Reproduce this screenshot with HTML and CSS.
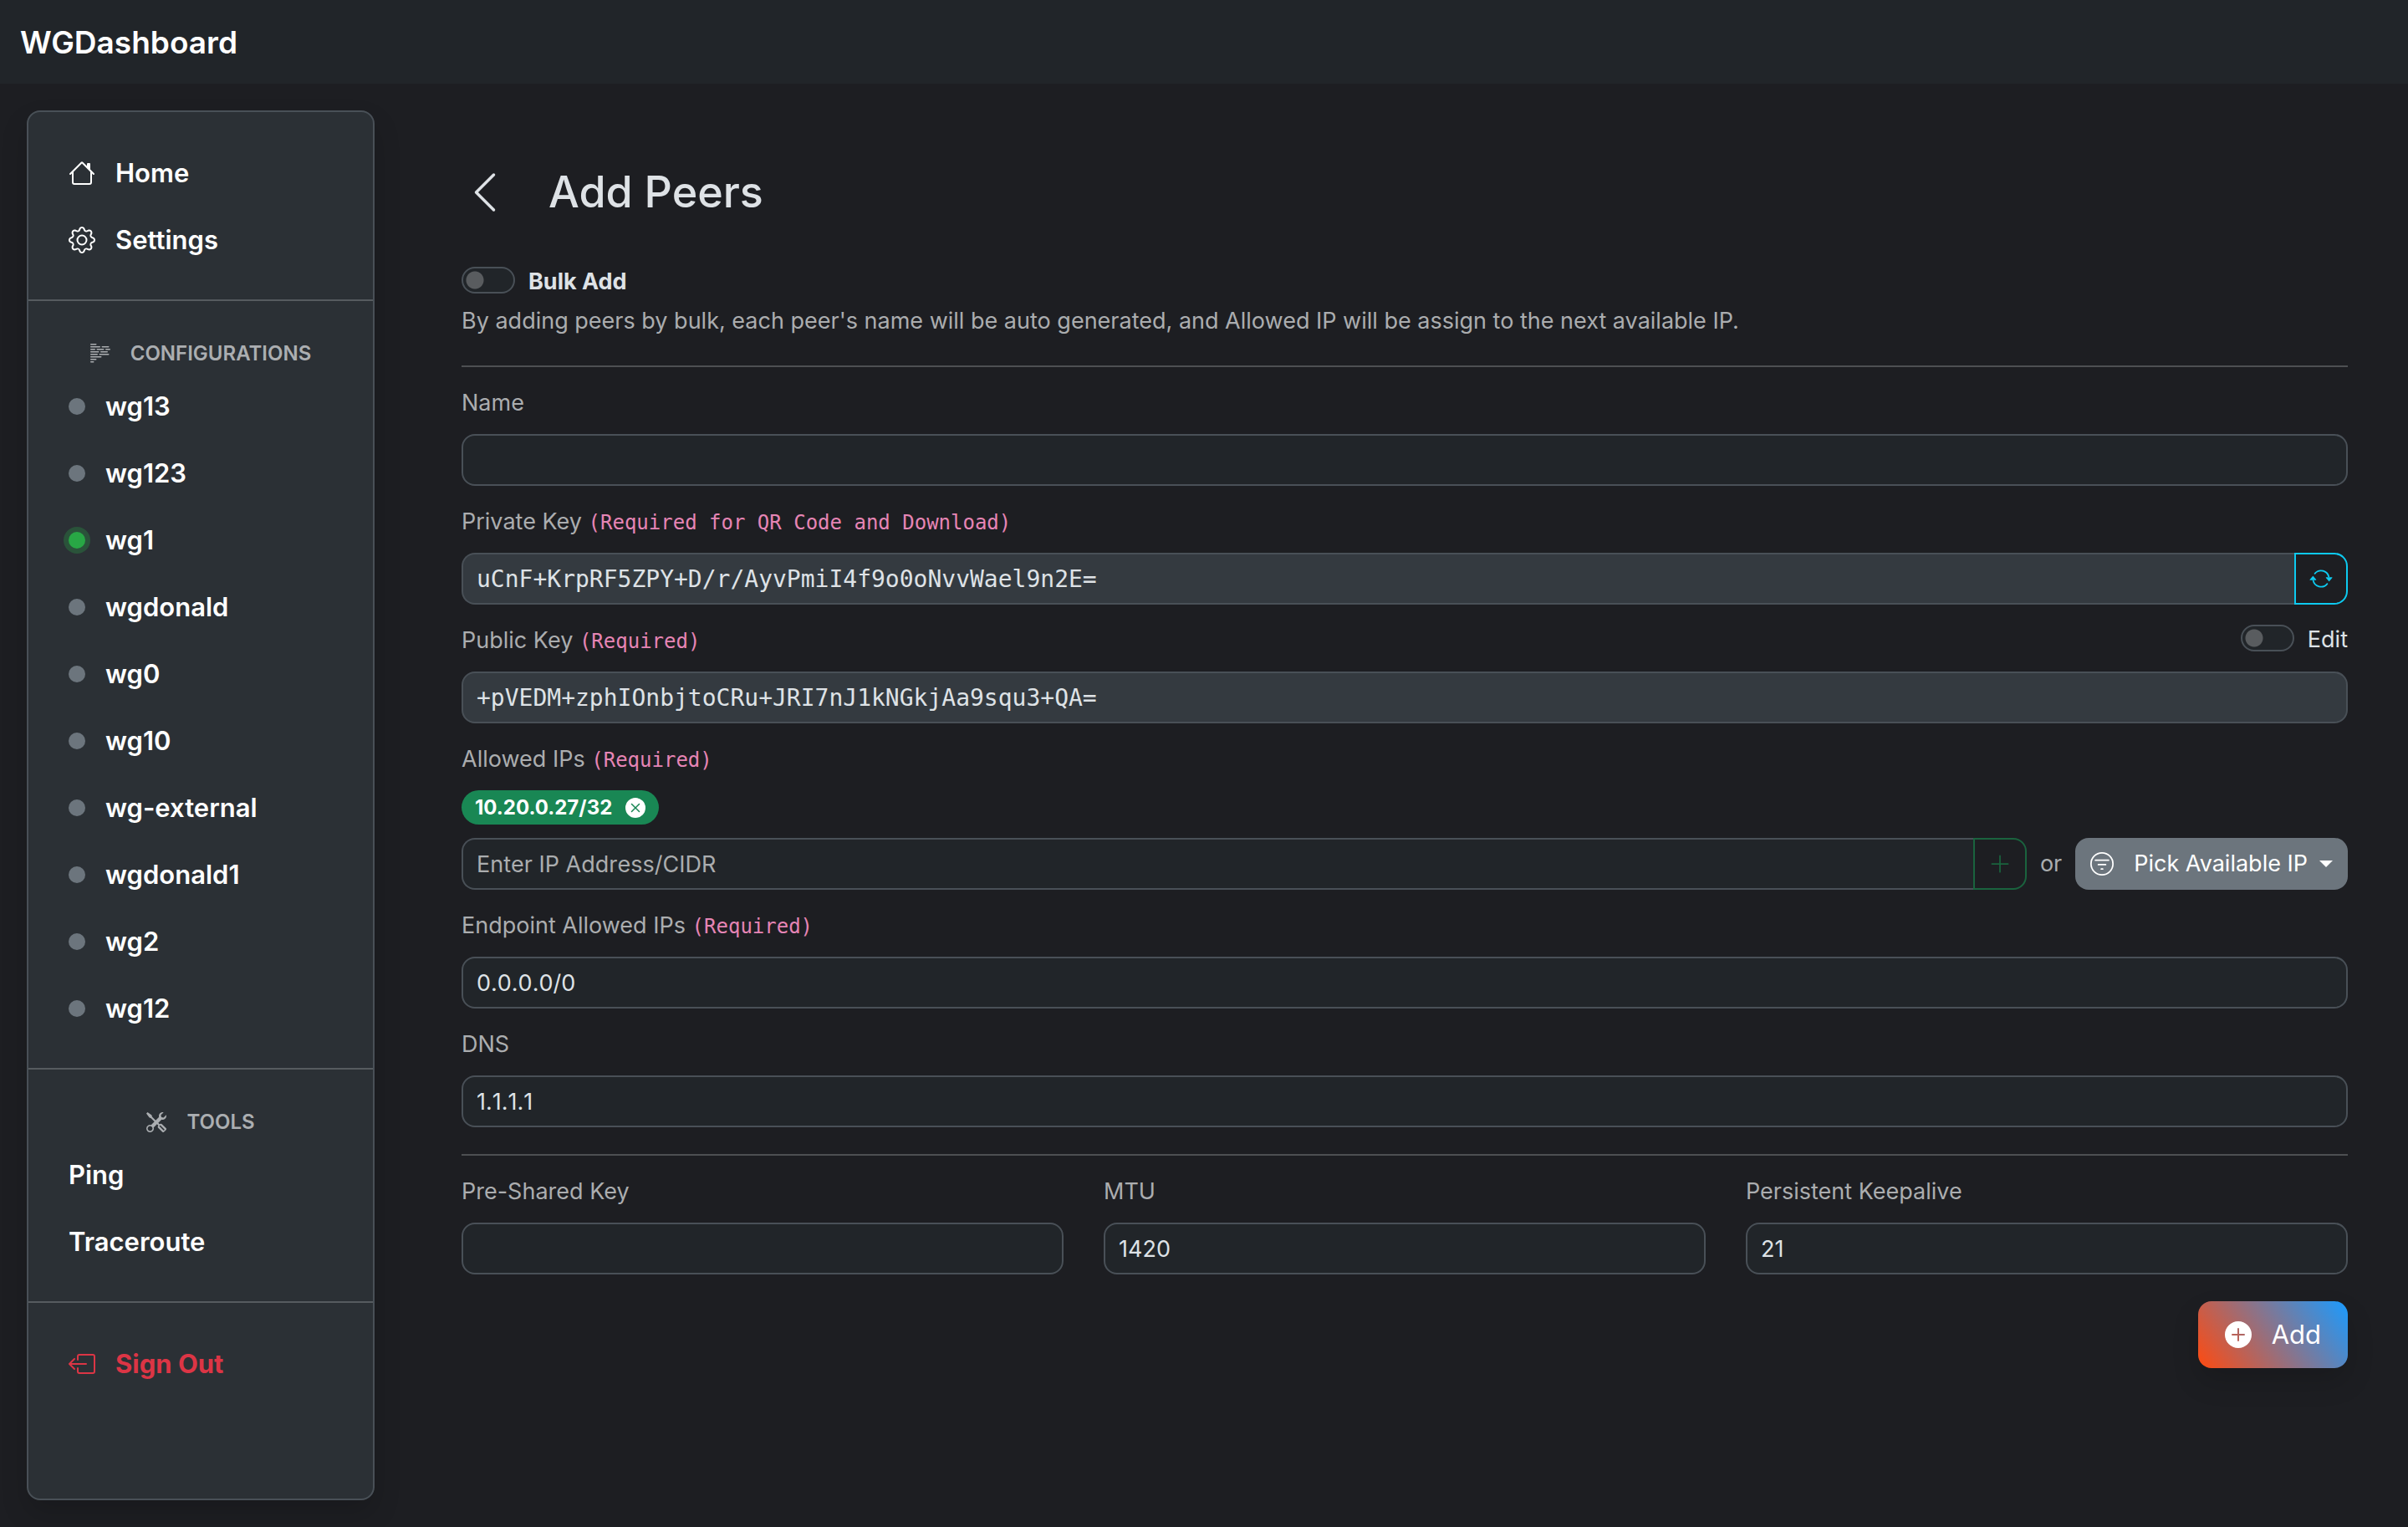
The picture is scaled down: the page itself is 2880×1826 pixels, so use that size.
FILE: index.html
```html
<!DOCTYPE html>
<html lang="en">
<head>
<meta charset="utf-8">
<title>WGDashboard</title>
<link rel="stylesheet" href="styles.css">
</head>
<body>
<header class="navbar"><a class="brand" href="#">WGDashboard</a></header>
<div class="layout">
  <nav class="sidebar">
    <ul class="nav-list">
      <li><a class="nav-link" href="#"><svg class="icon" viewBox="0 0 16 16"><path d="M8.707 1.5a1 1 0 0 0-1.414 0L.646 8.146a.5.5 0 0 0 .708.708L2 8.207V13.5A1.5 1.5 0 0 0 3.5 15h9a1.5 1.5 0 0 0 1.5-1.5V8.207l.646.647a.5.5 0 0 0 .708-.708L13 5.793V2.5a.5.5 0 0 0-.5-.5h-1a.5.5 0 0 0-.5.5v1.293zM13 7.207V13.5a.5.5 0 0 1-.5.5h-9a.5.5 0 0 1-.5-.5V7.207l5-5z"/></svg>Home</a></li>
      <li><a class="nav-link" href="#"><svg class="icon" viewBox="0 0 16 16"><path d="M8 4.754a3.246 3.246 0 1 0 0 6.492 3.246 3.246 0 0 0 0-6.492M5.754 8a2.246 2.246 0 1 1 4.492 0 2.246 2.246 0 0 1-4.492 0"/><path d="M9.796 1.343c-.527-1.79-3.065-1.79-3.592 0l-.094.319a.873.873 0 0 1-1.255.52l-.292-.16c-1.64-.892-3.433.902-2.54 2.541l.159.292a.873.873 0 0 1-.52 1.255l-.319.094c-1.79.527-1.79 3.065 0 3.592l.319.094a.873.873 0 0 1 .52 1.255l-.16.292c-.892 1.64.901 3.434 2.541 2.54l.292-.159a.873.873 0 0 1 1.255.52l.094.319c.527 1.79 3.065 1.79 3.592 0l.094-.319a.873.873 0 0 1 1.255-.52l.292.16c1.64.893 3.434-.902 2.54-2.541l-.159-.292a.873.873 0 0 1 .52-1.255l.319-.094c1.79-.527 1.79-3.065 0-3.592l-.319-.094a.873.873 0 0 1-.52-1.255l.16-.292c.893-1.64-.902-3.433-2.541-2.54l-.292.159a.873.873 0 0 1-1.255-.52zm-2.633.283c.246-.835 1.428-.835 1.674 0l.094.319a1.873 1.873 0 0 0 2.693 1.115l.291-.16c.764-.415 1.6.42 1.184 1.185l-.159.292a1.873 1.873 0 0 0 1.116 2.692l.318.094c.835.246.835 1.428 0 1.674l-.319.094a1.873 1.873 0 0 0-1.115 2.693l.16.291c.415.764-.42 1.6-1.185 1.184l-.291-.159a1.873 1.873 0 0 0-2.693 1.116l-.094.318c-.246.835-1.428.835-1.674 0l-.094-.319a1.873 1.873 0 0 0-2.692-1.115l-.292.16c-.764.415-1.6-.42-1.184-1.185l.159-.291A1.873 1.873 0 0 0 1.945 8.93l-.319-.094c-.835-.246-.835-1.428 0-1.674l.319-.094A1.873 1.873 0 0 0 3.06 4.377l-.16-.292c-.415-.764.42-1.6 1.185-1.184l.292.159a1.873 1.873 0 0 0 2.692-1.115z"/></svg>Settings</a></li>
    </ul>
    <hr class="nav-rule">
    <section class="nav-section">
      <h2 class="nav-heading"><svg class="icon-sm" viewBox="0 0 16 16"><path d="M0 .5A.5.5 0 0 1 .5 0h4a.5.5 0 0 1 0 1h-4A.5.5 0 0 1 0 .5m0 2A.5.5 0 0 1 .5 2h7a.5.5 0 0 1 0 1h-7a.5.5 0 0 1-.5-.5m9 0a.5.5 0 0 1 .5-.5h5a.5.5 0 0 1 0 1h-5a.5.5 0 0 1-.5-.5m-9 2A.5.5 0 0 1 .5 4h3a.5.5 0 0 1 0 1h-3a.5.5 0 0 1-.5-.5m5 0a.5.5 0 0 1 .5-.5h5a.5.5 0 0 1 0 1h-5a.5.5 0 0 1-.5-.5m7 0a.5.5 0 0 1 .5-.5h3a.5.5 0 0 1 0 1h-3a.5.5 0 0 1-.5-.5m-12 2A.5.5 0 0 1 .5 6h6a.5.5 0 0 1 0 1h-6a.5.5 0 0 1-.5-.5m8 0a.5.5 0 0 1 .5-.5h5a.5.5 0 0 1 0 1h-5a.5.5 0 0 1-.5-.5m-8 2A.5.5 0 0 1 .5 8h5a.5.5 0 0 1 0 1h-5a.5.5 0 0 1-.5-.5m7 0a.5.5 0 0 1 .5-.5h7a.5.5 0 0 1 0 1h-7a.5.5 0 0 1-.5-.5m-7 2a.5.5 0 0 1 .5-.5h8a.5.5 0 0 1 0 1h-8a.5.5 0 0 1-.5-.5m0 2a.5.5 0 0 1 .5-.5h4a.5.5 0 0 1 0 1h-4a.5.5 0 0 1-.5-.5m0 2a.5.5 0 0 1 .5-.5h2a.5.5 0 0 1 0 1h-2a.5.5 0 0 1-.5-.5"/></svg>CONFIGURATIONS</h2>
      <ul class="nav-list">
        <li><a class="nav-link" href="#"><span class="dot"></span>wg13</a></li>
        <li><a class="nav-link" href="#"><span class="dot"></span>wg123</a></li>
        <li><a class="nav-link" href="#"><span class="dot active"></span>wg1</a></li>
        <li><a class="nav-link" href="#"><span class="dot"></span>wgdonald</a></li>
        <li><a class="nav-link" href="#"><span class="dot"></span>wg0</a></li>
        <li><a class="nav-link" href="#"><span class="dot"></span>wg10</a></li>
        <li><a class="nav-link" href="#"><span class="dot"></span>wg-external</a></li>
        <li><a class="nav-link" href="#"><span class="dot"></span>wgdonald1</a></li>
        <li><a class="nav-link" href="#"><span class="dot"></span>wg2</a></li>
        <li><a class="nav-link" href="#"><span class="dot"></span>wg12</a></li>
      </ul>
    </section>
    <hr class="nav-rule">
    <section class="nav-section">
      <h2 class="nav-heading"><svg class="icon-sm" viewBox="0 0 16 16"><path d="M1 0 0 1l2.2 3.081a1 1 0 0 0 .815.419h.07a1 1 0 0 1 .708.293l2.675 2.675-2.617 2.654A3.003 3.003 0 0 0 0 13a3 3 0 1 0 5.878-.851l2.654-2.617.968.968-.305.914a1 1 0 0 0 .242 1.023l3.27 3.27a.997.997 0 0 0 1.414 0l1.586-1.586a.997.997 0 0 0 0-1.414l-3.27-3.27a1 1 0 0 0-1.023-.242L10.5 9.5l-.96-.96 2.68-2.643A3.005 3.005 0 0 0 16 3q0-.405-.102-.777l-2.14 2.141L12 4l-.364-1.757L13.777.102a3 3 0 0 0-3.675 3.68L7.462 6.46 4.793 3.793a1 1 0 0 1-.293-.707v-.071a1 1 0 0 0-.419-.814zm9.646 10.646a.5.5 0 0 1 .708 0l2.914 2.915a.5.5 0 0 1-.707.707l-2.915-2.914a.5.5 0 0 1 0-.708M3 11l.471.242.529.026.287.445.445.287.026.529L5 13l-.242.471-.026.529-.445.287-.287.445-.529.026L3 15l-.471-.242L2 14.732l-.287-.445L1.268 14l-.026-.529L1 13l.242-.471.026-.529.445-.287.287-.445.529-.026z"/></svg>TOOLS</h2>
      <ul class="nav-list">
        <li><a class="nav-link" href="#">Ping</a></li>
        <li><a class="nav-link" href="#">Traceroute</a></li>
      </ul>
    </section>
    <hr class="nav-rule">
    <ul class="nav-list">
      <li><a class="nav-link danger" href="#"><svg class="icon" viewBox="0 0 16 16"><path fill-rule="evenodd" d="M6 12.5a.5.5 0 0 0 .5.5h8a.5.5 0 0 0 .5-.5v-9a.5.5 0 0 0-.5-.5h-8a.5.5 0 0 0-.5.5v2a.5.5 0 0 1-1 0v-2A1.5 1.5 0 0 1 6.5 2h8A1.5 1.5 0 0 1 16 3.5v9a1.5 1.5 0 0 1-1.5 1.5h-8A1.5 1.5 0 0 1 5 12.5v-2a.5.5 0 0 1 1 0z"/><path fill-rule="evenodd" d="M.146 8.354a.5.5 0 0 1 0-.708l3-3a.5.5 0 1 1 .708.708L1.707 7.5H10.5a.5.5 0 0 1 0 1H1.707l2.147 2.146a.5.5 0 0 1-.708.708z"/></svg>Sign Out</a></li>
    </ul>
  </nav>
  <main class="content">
    <div class="title-row">
      <a class="back" href="#" aria-label="Back"><svg viewBox="0 0 16 16"><path fill-rule="evenodd" d="M11.354 1.646a.5.5 0 0 1 0 .708L5.707 8l5.647 5.646a.5.5 0 0 1-.708.708l-6-6a.5.5 0 0 1 0-.708l6-6a.5.5 0 0 1 .708 0"/></svg></a>
      <h1>Add Peers</h1>
    </div>
    <form>
      <div class="switch-row">
        <input class="switch" type="checkbox" role="switch" id="bulk">
        <label class="strong" for="bulk">Bulk Add</label>
      </div>
      <p class="hint">By adding peers by bulk, each peer's name will be auto generated, and Allowed IP will be assign to the next available IP.</p>
      <hr class="rule">
      <div class="fields">
        <div class="field">
          <label class="field-label" for="name">Name</label>
          <input class="control" id="name" type="text">
        </div>
        <div class="field">
          <label class="field-label" for="private">Private Key <code>(Required for QR Code and Download)</code></label>
          <div class="group">
            <input class="control mono muted" id="private" type="text" value="uCnF+KrpRF5ZPY+D/r/AyvPmiI4f9o0oNvvWael9n2E=" readonly>
            <button class="group-btn info" type="button" aria-label="Generate key"><svg viewBox="0 0 16 16"><path d="M11.534 7h3.932a.25.25 0 0 1 .192.41l-1.966 2.36a.25.25 0 0 1-.384 0l-1.966-2.36a.25.25 0 0 1 .192-.41m-11 2h3.932a.25.25 0 0 0 .192-.41L2.692 6.23a.25.25 0 0 0-.384 0L.342 8.59A.25.25 0 0 0 .534 9"/><path fill-rule="evenodd" d="M8 3c-1.552 0-2.94.707-3.857 1.818a.5.5 0 1 1-.771-.636A6.002 6.002 0 0 1 13.917 7H12.9A5 5 0 0 0 8 3M3.1 9a5.002 5.002 0 0 0 8.757 2.182.5.5 0 1 1 .771.636A6.002 6.002 0 0 1 2.083 9z"/></svg></button>
          </div>
        </div>
        <div class="field">
          <div class="label-row">
            <label class="field-label" for="public">Public Key <code>(Required)</code></label>
            <div class="switch-row">
              <input class="switch" type="checkbox" role="switch" id="edit">
              <label for="edit">Edit</label>
            </div>
          </div>
          <input class="control mono muted" id="public" type="text" value="+pVEDM+zphIOnbjtoCRu+JRI7nJ1kNGkjAa9squ3+QA=" readonly>
        </div>
        <div class="field">
          <label class="field-label" for="ip">Allowed IPs <code>(Required)</code></label>
          <div class="badges">
            <span class="badge">10.20.0.27/32<button type="button" aria-label="Remove"><svg viewBox="0 0 16 16"><path d="M16 8A8 8 0 1 1 0 8a8 8 0 0 1 16 0M5.354 4.646a.5.5 0 1 0-.708.708L7.293 8l-2.647 2.646a.5.5 0 0 0 .708.708L8 8.707l2.646 2.647a.5.5 0 0 0 .708-.708L8.707 8l2.647-2.646a.5.5 0 0 0-.708-.708L8 7.293z"/></svg></button></span>
          </div>
          <div class="ip-row">
            <div class="group">
              <input class="control" id="ip" type="text" placeholder="Enter IP Address/CIDR">
              <button class="group-btn success" type="button" aria-label="Add IP" disabled><svg viewBox="0 0 16 16"><path fill-rule="evenodd" d="M8 2a.5.5 0 0 1 .5.5v5h5a.5.5 0 0 1 0 1h-5v5a.5.5 0 0 1-1 0v-5h-5a.5.5 0 0 1 0-1h5v-5A.5.5 0 0 1 8 2"/></svg></button>
            </div>
            <span class="or">or</span>
            <button class="pick" type="button"><svg viewBox="0 0 16 16"><path d="M8 15A7 7 0 1 1 8 1a7 7 0 0 1 0 14m0 1A8 8 0 1 0 8 0a8 8 0 0 0 0 16"/><path d="M7 11.5a.5.5 0 0 1 .5-.5h1a.5.5 0 0 1 0 1h-1a.5.5 0 0 1-.5-.5m-2-3a.5.5 0 0 1 .5-.5h5a.5.5 0 0 1 0 1h-5a.5.5 0 0 1-.5-.5m-2-3a.5.5 0 0 1 .5-.5h9a.5.5 0 0 1 0 1h-9a.5.5 0 0 1-.5-.5"/></svg><span>Pick Available IP</span><i class="caret"></i></button>
          </div>
        </div>
        <div class="field">
          <label class="field-label" for="endpoint">Endpoint Allowed IPs <code>(Required)</code></label>
          <input class="control" id="endpoint" type="text" value="0.0.0.0/0">
        </div>
        <div class="field">
          <label class="field-label" for="dns">DNS</label>
          <input class="control" id="dns" type="text" value="1.1.1.1">
        </div>
      </div>
      <hr class="rule">
      <div class="columns">
        <div class="field">
          <label class="field-label" for="psk">Pre-Shared Key</label>
          <input class="control" id="psk" type="text">
        </div>
        <div class="field">
          <label class="field-label" for="mtu">MTU</label>
          <input class="control" id="mtu" type="text" value="1420">
        </div>
        <div class="field">
          <label class="field-label" for="keepalive">Persistent Keepalive</label>
          <input class="control" id="keepalive" type="text" value="21">
        </div>
      </div>
      <div class="actions">
        <button class="add" type="submit"><svg class="icon" viewBox="0 0 16 16"><path d="M16 8A8 8 0 1 1 0 8a8 8 0 0 1 16 0M8.5 4.5a.5.5 0 0 0-1 0v3h-3a.5.5 0 0 0 0 1h3v3a.5.5 0 0 0 1 0v-3h3a.5.5 0 0 0 0-1h-3z"/></svg>Add</button>
      </div>
    </form>
  </main>
</div>
</body>
</html>
```
FILE: styles.css
```css
* { box-sizing: border-box; }

body {
  margin: 0;
  min-height: 100vh;
  display: flex;
  flex-direction: column;
  background: #1d1e22;
  color: #dee2e6;
  font-family: Inter, "Noto Sans", sans-serif;
  font-size: 27px;
  line-height: 48px;
}

svg { display: block; flex: none; fill: currentColor; }
a { color: inherit; text-decoration: none; }
button, input { font: inherit; color: inherit; margin: 0; }
h1, h2, p, ul { margin: 0; padding: 0; }
ul { list-style: none; }
.icon { width: 32px; height: 32px; }
.icon-sm { width: 24px; height: 24px; }

.navbar {
  display: flex;
  align-items: center;
  height: 100px;
  padding: 2px 24px 0;
  background: #212529;
}
.brand { color: #fff; font-size: 37px; font-weight: 600; }

.layout {
  flex: 1;
  display: flex;
  padding: 32px;
}

.sidebar {
  flex: none;
  width: 416px;
  padding: 32px 0;
  border: 2px solid #495057;
  border-radius: 16px;
  background: #2b3035;
  box-shadow: 0 16px 32px rgba(0, 0, 0, 0.15);
}
.nav-link {
  display: flex;
  align-items: center;
  gap: 24px;
  height: 80px;
  padding: 2px 48px 0;
  color: #fff;
  font-size: 31px;
  font-weight: 600;
}
.nav-link.danger { color: #dc3545; font-weight: 700; }
.nav-rule {
  height: 2px;
  margin: 32px 0;
  border: 0;
  background: #565b5f;
}
.nav-heading {
  display: flex;
  justify-content: center;
  align-items: center;
  gap: 24px;
  height: 53px;
  padding-top: 8px;
  color: #abaeb1;
  font-size: 24px;
  font-weight: 600;
}
.dot {
  width: 20px;
  height: 20px;
  border-radius: 50%;
  background: #6c757d;
}
.dot.active {
  background: #28a745;
  box-shadow: 0 0 0 6px rgba(40, 167, 69, 0.3);
}

.content {
  flex: 1;
  min-width: 0;
  padding: 64px 40px 0 104px;
}
.title-row {
  display: flex;
  align-items: center;
  gap: 48px;
  height: 67px;
  margin-bottom: 48px;
}
.back svg { width: 56px; height: 56px; }
h1 { font-size: 52px; font-weight: 500; }

.switch-row {
  display: flex;
  align-items: center;
  gap: 16px;
  height: 48px;
}
.switch-row label { padding-top: 4px; }
.strong { font-weight: 700; }
.switch {
  appearance: none;
  width: 64px;
  height: 32px;
  border: 2px solid #495057;
  border-radius: 16px;
  background: #212529 radial-gradient(circle at 14px 14px, #595c5f 10px, transparent 11px);
}
.hint {
  margin-top: 4px;
  color: #abadaf;
  line-height: 42px;
}
.rule {
  height: 2px;
  margin: 32px 0 16px;
  border: 0;
  background: #4d4f52;
}

.fields { display: grid; gap: 16px; }
.field-label {
  display: block;
  margin-bottom: 10px;
  color: #abadaf;
  line-height: 54px;
}
.label-row { display: flex; justify-content: space-between; }
code {
  color: #e685b5;
  font-family: "DejaVu Sans Mono", monospace;
  font-size: 24px;
  line-height: 24px;
}
.control {
  display: block;
  width: 100%;
  height: 62px;
  padding: 8px 16px;
  border: 2px solid #495057;
  border-radius: 16px;
  background: #212529;
  font-kerning: none;
  outline: 0;
}
.control::placeholder { color: #abadaf; opacity: 1; }
.control.muted { background: #343a40; }
.mono { font-family: "DejaVu Sans Mono", monospace; font-size: 28px; }

.group { display: flex; flex: 1; }
.group .control { border-right: 0; border-radius: 16px 0 0 16px; }
.group-btn {
  flex: none;
  display: grid;
  place-items: center;
  width: 64px;
  height: 62px;
  padding: 0;
  border: 2px solid;
  border-radius: 0 16px 16px 0;
  background: transparent;
}
.group-btn svg { width: 28px; height: 28px; }
.group-btn.info { color: #0dcaf0; }
.group-btn.success { color: #1a633e; }

.badges { display: flex; margin-bottom: 16px; }
.badge {
  display: flex;
  align-items: center;
  gap: 16px;
  height: 41px;
  padding: 0 16px;
  border-radius: 21px;
  background: #198754;
  color: #fff;
  font-size: 24px;
  font-weight: 700;
}
.badge button { padding: 0; border: 0; background: none; }
.badge svg { width: 24px; height: 24px; }

.ip-row { display: flex; align-items: center; gap: 16px; }
.or { color: #abadaf; }
.pick {
  display: flex;
  align-items: center;
  gap: 24px;
  height: 62px;
  padding: 0 18px;
  border: 0;
  border-radius: 16px;
  background: #6c757d;
  color: #fff;
}
.pick svg { width: 28px; height: 28px; }
.caret {
  margin-left: -10px;
  border: 8px solid transparent;
  border-top-color: #fff;
  border-bottom: 0;
}

.columns {
  display: grid;
  grid-template-columns: repeat(3, 1fr);
  gap: 48px;
}
.actions {
  display: flex;
  justify-content: flex-end;
  margin-top: 32px;
}
.add {
  display: flex;
  align-items: center;
  gap: 24px;
  height: 80px;
  padding: 0 32px;
  border: 0;
  border-radius: 16px;
  background: linear-gradient(234deg, #1a9bff, #ff4a10);
  box-shadow: 0 16px 32px rgba(0, 0, 0, 0.15);
  color: #fff;
  font-size: 31px;
}
```
